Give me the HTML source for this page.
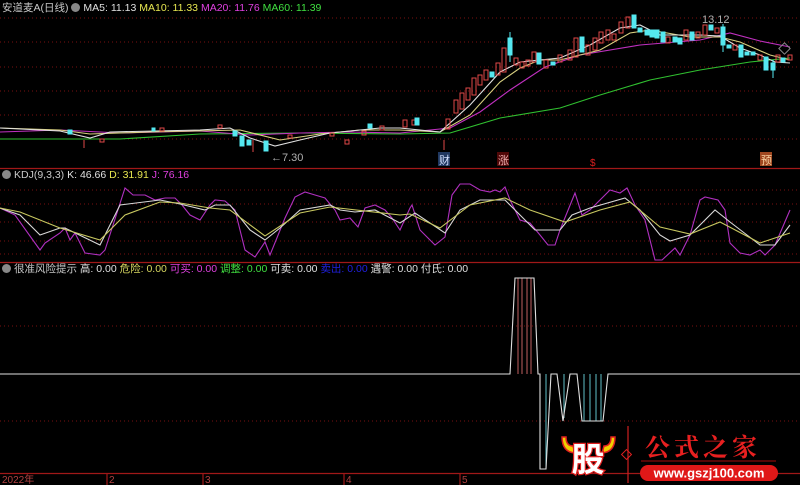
<!DOCTYPE html>
<html><head><meta charset="utf-8"><style>
html,body{margin:0;padding:0;background:#000;}
body{width:800px;height:485px;overflow:hidden;position:relative;font-family:"Liberation Sans","Noto Sans CJK SC",sans-serif;}
.h{position:absolute;font-size:10.5px;white-space:nowrap;color:#c8c8c8;line-height:12px;}
.ic{display:inline-block;width:9px;height:9px;border-radius:50%;background:#888;vertical-align:-1px;margin-right:3px;}
svg{position:absolute;left:0;top:0;}
</style></head><body>
<svg width="800" height="485" viewBox="0 0 800 485">
<g stroke="#7a1010" stroke-dasharray="1,3" stroke-width="1">
<line x1="0" y1="18" x2="800" y2="18"/><line x1="0" y1="42" x2="800" y2="42"/><line x1="0" y1="67" x2="800" y2="67"/><line x1="0" y1="91" x2="800" y2="91"/><line x1="0" y1="115" x2="800" y2="115"/><line x1="0" y1="139" x2="800" y2="139"/>
<line x1="0" y1="190" x2="800" y2="190"/><line x1="0" y1="204" x2="800" y2="204"/><line x1="0" y1="222" x2="800" y2="222"/><line x1="0" y1="241" x2="800" y2="241"/><line x1="0" y1="254" x2="800" y2="254"/>
<line x1="0" y1="326" x2="800" y2="326"/><line x1="0" y1="421" x2="800" y2="421"/>
</g>
<g stroke="#a01818" stroke-width="1.2">
<line x1="0" y1="168.5" x2="800" y2="168.5"/><line x1="0" y1="262.5" x2="800" y2="262.5"/><line x1="0" y1="473.5" x2="800" y2="473.5"/>
<line x1="107" y1="473" x2="107" y2="485"/><line x1="203" y1="473" x2="203" y2="485"/><line x1="344" y1="473" x2="344" y2="485"/><line x1="460" y1="473" x2="460" y2="485"/>
</g>
<g font-size="10" fill="#b04040" font-family="Liberation Sans,Noto Sans CJK SC,sans-serif">
<text x="2" y="483">2022年</text><text x="109" y="483">2</text><text x="205" y="483">3</text><text x="346" y="483">4</text><text x="462" y="483">5</text>
</g>
<!-- MA lines -->
<g fill="none" stroke-width="1.1">
<polyline stroke="#30c030" points="0,139 120,139 200,134 300,133 400,134 450,133 500,118 560,108 600,95 650,80 700,70 750,62 790,58"/>
<polyline stroke="#c030c0" points="0,132 60,130 120,133 200,131 250,135 300,133 350,132 400,133 450,128 480,112 510,90 545,67 580,55 640,45 700,40 730,33 760,41 790,47"/>
<polyline stroke="#d8d080" points="0,128 60,130 90,134 150,132 240,130 280,140 320,134 360,130 400,130 440,132 470,115 500,82 520,68 540,60 560,60 600,50 630,33 650,30 690,37 720,37 740,42 770,55 790,60"/>
<polyline stroke="#e0e0e0" points="0,128 60,131 90,138 110,132 200,130 230,128 250,138 275,146 300,140 330,133 380,128 400,128 440,132 470,105 500,72 520,62 540,60 560,58 590,45 620,28 640,25 660,35 700,35 720,36 740,48 760,55 775,62 790,63"/>
</g>
<g stroke-width="1">
<g fill="none" stroke="#e04848">
<rect x="403" y="120" width="4" height="7"/><rect x="446" y="119" width="4" height="10"/><rect x="454" y="100" width="4" height="13"/><rect x="460" y="93" width="4" height="16"/><rect x="466" y="88" width="4" height="12"/><rect x="472" y="78" width="4" height="17"/><rect x="478" y="75" width="4" height="10"/><rect x="484" y="70" width="4" height="10"/><rect x="496" y="63" width="4" height="12"/><rect x="502" y="48" width="4" height="24"/><rect x="514" y="58" width="4" height="7"/><rect x="520" y="62" width="4" height="6"/><rect x="526" y="60" width="4" height="6"/><rect x="532" y="52" width="4" height="10"/><rect x="544" y="60" width="4" height="8"/><rect x="558" y="55" width="4" height="7"/><rect x="568" y="50" width="4" height="10"/><rect x="574" y="38" width="4" height="19"/><rect x="586" y="45" width="4" height="10"/><rect x="593" y="38" width="4" height="12"/><rect x="599" y="32" width="4" height="11"/><rect x="606" y="30" width="4" height="10"/><rect x="612" y="34" width="4" height="6"/><rect x="619" y="22" width="4" height="11"/><rect x="626" y="17" width="4" height="11"/><rect x="666" y="37" width="4" height="6"/><rect x="684" y="30" width="4" height="10"/><rect x="696" y="32" width="4" height="6"/><rect x="703" y="25" width="4" height="10"/><rect x="715" y="28" width="4" height="5"/><rect x="733" y="45" width="4" height="5"/><rect x="758" y="55" width="4" height="5"/><rect x="776" y="55" width="4" height="7"/><rect x="788" y="55" width="4" height="5"/>
<rect x="100" y="139" width="4" height="3"/><rect x="160" y="128" width="4" height="3"/><rect x="218" y="125" width="4" height="3"/><rect x="288" y="135" width="4" height="3"/><rect x="330" y="133" width="4" height="3"/><rect x="345" y="140" width="4" height="4"/><rect x="362" y="131" width="4" height="4"/><rect x="380" y="126" width="4" height="4"/><rect x="412" y="120" width="4" height="5"/>
<line x1="444" y1="140" x2="444" y2="150"/><line x1="84" y1="140" x2="84" y2="148"/><line x1="253" y1="140" x2="253" y2="152"/>
</g>
<g fill="#55e8f0" stroke="#55e8f0">
<rect x="415" y="118" width="4" height="7"/><rect x="490" y="72" width="4" height="5"/><rect x="508" y="38" width="4" height="17"/><line x1="510" y1="32" x2="510" y2="62"/><rect x="537" y="53" width="4" height="11"/><rect x="551" y="62" width="4" height="3"/><rect x="580" y="37" width="4" height="15"/><rect x="632" y="15" width="4" height="13"/><rect x="638" y="28" width="4" height="4"/><rect x="645" y="30" width="4" height="5"/><rect x="650" y="30" width="4" height="7"/><rect x="655" y="30" width="4" height="8"/><rect x="661" y="32" width="4" height="10"/><rect x="673" y="37" width="4" height="5"/><rect x="678" y="38" width="4" height="6"/><rect x="690" y="32" width="4" height="8"/><rect x="709" y="25" width="4" height="5"/><rect x="721" y="27" width="4" height="18"/><line x1="723" y1="24" x2="723" y2="52"/><rect x="727" y="45" width="4" height="3"/><rect x="739" y="45" width="4" height="12"/><rect x="745" y="52" width="4" height="3"/><rect x="751" y="52" width="4" height="3"/><rect x="764" y="57" width="4" height="13"/><rect x="771" y="63" width="4" height="7"/><line x1="773" y1="60" x2="773" y2="78"/><rect x="781" y="58" width="4" height="4"/>
<rect x="68" y="130" width="4" height="4"/><rect x="240" y="136" width="4" height="10"/><rect x="247" y="140" width="4" height="5"/><rect x="264" y="141" width="4" height="10"/><rect x="233" y="131" width="4" height="5"/><rect x="152" y="128" width="3" height="3"/><rect x="368" y="124" width="4" height="4"/></g>
</g>
<g fill="#b0b0b0" font-size="11"><text x="702" y="23">13.12</text><text x="271" y="161">←7.30</text></g>
<rect x="438" y="152" width="12" height="14" fill="#203860"/><text x="439" y="164" font-size="11" fill="#d0e0ff">财</text>
<rect x="497" y="152" width="12" height="14" fill="#500808"/><text x="498" y="164" font-size="11" fill="#f0b0b0">涨</text>
<text x="590" y="166" font-size="10" fill="#e02020">$</text>
<rect x="760" y="152" width="12" height="14" fill="#a04820"/><text x="761" y="164" font-size="11" fill="#f8d0a0">预</text>
<!-- KDJ -->
<g fill="none" stroke-width="1.1">
<polyline stroke="#b030c0" points="0,208 15,215 40,250 45,243 60,233 65,228 70,240 75,233 85,253 100,255 105,250 125,188 133,195 145,195 155,200 165,198 175,198 182,205 190,215 200,220 210,205 215,200 225,201 235,210 245,250 255,257 265,242 270,255 285,218 295,197 305,192 315,195 325,198 335,210 340,220 350,218 358,227 365,208 375,205 385,210 392,218 400,230 410,208 412,205 420,230 435,245 445,237 452,195 460,184 470,184 480,190 490,192 495,190 500,192 505,187 510,200 520,220 530,223 540,235 548,245 555,245 560,230 575,193 582,215 590,210 600,200 610,190 620,193 627,188 635,205 645,220 655,260 662,260 675,248 680,255 690,235 700,200 705,197 718,200 725,210 730,243 740,253 750,255 760,250 765,255 775,245 790,210"/>
<polyline stroke="#d8d8d8" points="0,208 20,215 40,235 60,228 65,228 100,245 120,205 160,200 180,204 205,210 215,205 230,205 250,230 265,240 280,228 300,210 330,205 340,210 355,212 375,210 400,223 415,213 445,233 460,210 480,200 505,200 520,215 535,230 560,230 572,215 590,208 625,198 640,210 660,235 670,241 690,235 715,210 730,222 760,245 775,245 790,225"/>
<polyline stroke="#c8c860" points="0,208 20,212 60,228 100,240 125,215 160,202 180,203 210,208 230,210 265,236 300,213 330,207 400,215 410,214 440,228 470,205 505,198 530,210 565,222 600,210 630,202 660,227 690,234 720,222 760,243 790,233"/>
</g>
<!-- bottom indicator -->
<g stroke="#c06060" stroke-width="1"><line x1="518" y1="278" x2="518" y2="374"/><line x1="522" y1="278" x2="522" y2="374"/><line x1="527" y1="278" x2="527" y2="374"/><line x1="531" y1="278" x2="531" y2="374"/></g>
<g stroke="#60c0c8" stroke-width="1"><line x1="546" y1="374" x2="546" y2="469"/><line x1="564" y1="374" x2="564" y2="418"/><line x1="584" y1="374" x2="584" y2="421"/><line x1="590" y1="374" x2="590" y2="421"/><line x1="596" y1="374" x2="596" y2="421"/><line x1="601" y1="374" x2="601" y2="421"/></g>
<polyline fill="none" stroke="#e0e0e0" stroke-width="1.1" points="0,374 510,374 515,278 534,278 538,374 540,374 540,469 546,469 551,374 557,374 563,421 570,374 577,374 582,421 603,421 608,374 800,374"/>
<!-- logo -->
<line x1="628" y1="426" x2="628" y2="483" stroke="#d02020" stroke-width="1.2"/>
<rect x="623" y="451" width="7" height="7" transform="rotate(45 626.5 454.5)" fill="none" stroke="#e02020"/>
<line x1="641" y1="461" x2="776" y2="461" stroke="#700808" stroke-width="1.5"/>
<rect x="640" y="465" width="138" height="16" rx="8" fill="#e01818"/>
<text x="709" y="477.5" font-size="13" font-weight="bold" fill="#fff" text-anchor="middle">www.gszj100.com</text>
<text x="645" y="456" font-size="25" fill="#e82020" font-weight="bold" font-family="Noto Serif CJK SC,serif" letter-spacing="4">公式之家</text>
<path d="M562 437 Q562 452 575 453 L573 446 Q566 446 566 437Z" fill="#f0d000" stroke="#e02020" stroke-width="1.5"/>
<path d="M615 437 Q615 452 602 453 L604 446 Q611 446 611 437Z" fill="#f0d000" stroke="#e02020" stroke-width="1.5"/>
<text x="588" y="471" font-size="33" font-weight="bold" fill="#fff" stroke="#e02020" stroke-width="2.5" paint-order="stroke" text-anchor="middle">股</text>
</svg>
<div class="h" style="left:2px;top:2px;">安道麦A(日线) <span class="ic"></span><span style="color:#e0e0e0">MA5: 11.13</span> <span style="color:#e6e650">MA10: 11.33</span> <span style="color:#e040e0">MA20: 11.76</span> <span style="color:#40e040">MA60: 11.39</span></div>
<div class="h" style="left:2px;top:169px;"><span class="ic"></span>KDJ(9,3,3) <span style="color:#e0e0e0">K: 46.66</span> <span style="color:#e6e650">D: 31.91</span> <span style="color:#e040e0">J: 76.16</span></div>
<div class="h" style="left:2px;top:263px;"><span class="ic"></span>很准风险提示 <span style="color:#e0e0e0">高: 0.00</span> <span style="color:#d8d860">危险: 0.00</span> <span style="color:#e040e0">可买: 0.00</span> <span style="color:#40e040">调整: 0.00</span> <span style="color:#e0e0e0">可卖: 0.00</span> <span style="color:#2020e0">卖出: 0.00</span> <span style="color:#e0e0e0">遇警: 0.00</span> <span style="color:#e0e0e0">付氏: 0.00</span></div>
<div style="position:absolute;left:780px;top:44px;width:7px;height:7px;border:1px solid #888;transform:rotate(45deg);"></div>
</body></html>
